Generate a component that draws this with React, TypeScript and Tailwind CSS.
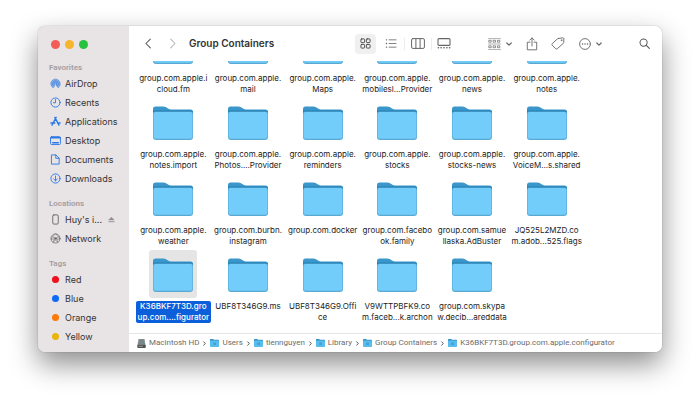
import type { ReactNode } from "react";
import clsx from "clsx";

type Entry = { lines: string[]; selected?: boolean };

const ENTRIES: Entry[] = [
  { lines: ["group.com.apple.i", "cloud.fm"] },
  { lines: ["group.com.apple.", "mail"] },
  { lines: ["group.com.apple.", "Maps"] },
  { lines: ["group.com.apple.", "mobilesl...Provider"] },
  { lines: ["group.com.apple.", "news"] },
  { lines: ["group.com.apple.", "notes"] },
  { lines: ["group.com.apple.", "notes.import"] },
  { lines: ["group.com.apple.", "Photos....Provider"] },
  { lines: ["group.com.apple.", "reminders"] },
  { lines: ["group.com.apple.", "stocks"] },
  { lines: ["group.com.apple.", "stocks-news"] },
  { lines: ["group.com.apple.", "VoiceM...s.shared"] },
  { lines: ["group.com.apple.", "weather"] },
  { lines: ["group.com.burbn.", "instagram"] },
  { lines: ["group.com.docker"] },
  { lines: ["group.com.facebo", "ok.family"] },
  { lines: ["group.com.samue", "llaska.AdBuster"] },
  { lines: ["JQ525L2MZD.co", "m.adob...525.flags"] },
  { lines: ["K36BKF7T3D.gro", "up.com....figurator"], selected: true },
  { lines: ["UBF8T346G9.ms"] },
  { lines: ["UBF8T346G9.Offi", "ce"] },
  { lines: ["V9WTTPBFK9.co", "m.faceb...k.archon"] },
  { lines: ["group.com.skypa", "w.decib...areddata"] },
];

const PATH = [
  "Macintosh HD",
  "Users",
  "tiennguyen",
  "Library",
  "Group Containers",
  "K36BKF7T3D.group.com.apple.configurator",
];

const TAGS = [
  { name: "Red", color: "bg-[#f0101c]" },
  { name: "Blue", color: "bg-[#0f6af5]" },
  { name: "Orange", color: "bg-[#fb7a08]" },
  { name: "Yellow", color: "bg-[#e9b50c]" },
  { name: "Green", color: "bg-[#28b83c]" },
];

function Folder() {
  return (
    <svg viewBox="0 0 40 34" className="h-[34px] w-10" aria-hidden>
      <path
        d="M0 3Q0 .5 2.500 .5H10Q12 .5 13.500 1.500L15.500 2.800Q16.500 3.500 18 3.500H37.500Q40 3.500 40 6V12H0Z"
        fill="#3b96cb"
      />
      <path d="M0 4.500H38.500Q40 4.500 40 6.500V12H0Z" fill="#2280b5" />
      <path d="M0 7.500Q0 5.500 2 5.500H38Q40 5.500 40 7.500V31Q40 34 37 34H3Q0 34 0 31Z" fill="#5aa9d2" />
      <path d="M.6 8Q.6 6 2.400 6H37.600Q39.400 6 39.400 8V30.500Q39.400 32.800 37 32.800H3Q.6 32.800 .6 30.500Z" fill="#72cdfa" />
    </svg>
  );
}

function MiniFolder() {
  return (
    <svg viewBox="0 0 9 8" className="h-2 w-[9px] shrink-0" aria-hidden>
      <path d="M0 .7Q0 0 .7 0H3L4 .8H8.300Q9 .8 9 1.500V4H0Z" fill="#318fc4" />
      <rect y="1.500" width="9" height="6.500" rx=".7" fill="#58bdec" />
      <rect x="3.200" y="3.500" width="2.800" height="2.500" rx=".5" fill="#3fa3d3" />
    </svg>
  );
}

function Drive() {
  return (
    <svg viewBox="0 0 9 9" className="size-[9px] shrink-0" aria-hidden>
      <path d="M1.500 0H7.500L8.600 6.500H.4Z" fill="#8b8f90" />
      <path d="M2.200 .8H6.800L7.500 5H1.500Z" fill="#78888a" />
      <rect x=".3" y="5.800" width="8.400" height="3.200" rx=".7" fill="#4c4e50" />
      <path d="M1.300 7.300H6" stroke="#b9bdbf" strokeWidth=".7" />
    </svg>
  );
}

function Glyph({
  size = "size-[11px]",
  box = "0 0 12 12",
  children,
}: {
  size?: string;
  box?: string;
  children: ReactNode;
}) {
  return (
    <svg
      viewBox={box}
      className={clsx("shrink-0", size)}
      fill="none"
      stroke="currentColor"
      strokeLinecap="round"
      strokeLinejoin="round"
      aria-hidden
    >
      {children}
    </svg>
  );
}

const FAVORITES = [
  {
    name: "AirDrop",
    icon: (
      <Glyph>
        <path d="M3.200 10.600A5.100 5.100 0 1 1 8.800 10.600L6.700 7.500A1 1 0 1 0 5.300 7.500Z" fill="currentColor" fillOpacity=".5" strokeWidth=".6" />
        <path d="M3.500 8.300A3.200 3.200 0 1 1 8.500 8.300M4.700 7.400A1.700 1.700 0 1 1 7.300 7.400" strokeWidth=".6" />
      </Glyph>
    ),
  },
  {
    name: "Recents",
    icon: (
      <Glyph>
        <circle cx="6" cy="6" r="5" />
        <path d="M6 2.800V6.300H3.700" />
      </Glyph>
    ),
  },
  {
    name: "Applications",
    icon: (
      <Glyph>
        <path d="M5.300 1.500L9.800 10M6.700 1.500L2.200 10M1 7.700H5.300M8.300 7.700H11" strokeWidth="1.500" />
      </Glyph>
    ),
  },
  {
    name: "Desktop",
    icon: (
      <Glyph>
        <rect x=".6" y="1.800" width="10.800" height="8.600" rx="1.200" />
        <path d="M.8 3H11.200" strokeWidth="1.400" />
        <path d="M3 8.500H9" strokeWidth="1.800" />
      </Glyph>
    ),
  },
  {
    name: "Documents",
    icon: (
      <Glyph>
        <path d="M2 1H6.500L10 4.500V11H2ZM6.300 1V4.700H10" />
      </Glyph>
    ),
  },
  {
    name: "Downloads",
    icon: (
      <Glyph>
        <circle cx="6" cy="6" r="5" />
        <path d="M6 3.300V8.400M4 6.600L6 8.500L8 6.600" />
      </Glyph>
    ),
  },
];

function SidebarHeading({ children }: { children: ReactNode }) {
  return (
    <h2 className="h-3 shrink-0 pl-[11px] font-['Roboto','Liberation_Sans',sans-serif] text-[8px] leading-3 font-semibold text-[#a39d9e]">
      {children}
    </h2>
  );
}

function SidebarItem({
  icon,
  label,
  children,
}: {
  icon: ReactNode;
  label: string;
  children?: ReactNode;
}) {
  return (
    <li>
      <button
        type="button"
        className="flex h-[19px] w-full items-center gap-1 pr-[14px] pl-3 text-left text-[9px] leading-3 text-[#353334]"
      >
        <span className="flex w-[11px] justify-center">{icon}</span>
        <span>{label}</span>
        {children}
      </button>
    </li>
  );
}

function Sidebar() {
  return (
    <aside className="flex w-[91px] shrink-0 flex-col overflow-hidden bg-[#e8e3e4]">
      <div className="flex h-9 shrink-0 items-center gap-[5px] pl-[13px]">
        <button type="button" aria-label="Close" className="size-[9px] rounded-full bg-[#f25d57]" />
        <button type="button" aria-label="Minimize" className="size-[9px] rounded-full bg-[#f7b42d]" />
        <button type="button" aria-label="Zoom" className="size-[9px] rounded-full bg-[#28c23f]" />
      </div>
      <SidebarHeading>Favorites</SidebarHeading>
      <ul className="mb-[10px] shrink-0">
        {FAVORITES.map((item) => (
          <SidebarItem
            key={item.name}
            label={item.name}
            icon={<span className="text-[#2b79e6]">{item.icon}</span>}
          />
        ))}
      </ul>
      <SidebarHeading>Locations</SidebarHeading>
      <ul className="mb-[10px] shrink-0">
        <SidebarItem
          label="Huy's i..."
          icon={
            <Glyph>
              <rect x="3" y="1" width="6" height="10" rx="1.200" stroke="#6a6667" />
            </Glyph>
          }
        >
          <span className="ml-auto text-[#8f8b8c]">
            <Glyph size="size-[7px]" box="0 0 8 8">
              <path d="M4 1.500L7 4.500H1Z" fill="currentColor" strokeWidth=".5" />
              <path d="M1 6.500H7" />
            </Glyph>
          </span>
        </SidebarItem>
        <SidebarItem
          label="Network"
          icon={
            <span className="text-[#6a6667]">
              <Glyph>
                <circle cx="6" cy="6" r="5" strokeWidth=".8" />
                <circle cx="6" cy="6" r="1.200" fill="currentColor" strokeWidth=".4" />
                <path d="M6 1L3 4L1.200 6.800L4.500 6.500L3.500 10.200L6 7.500L8.500 10.200L7.500 6.500L10.800 6.800L9 4ZM3 4L6 6L9 4" strokeWidth=".6" />
              </Glyph>
            </span>
          }
        />
      </ul>
      <SidebarHeading>Tags</SidebarHeading>
      <ul className="shrink-0">
        {TAGS.map((tag) => (
          <SidebarItem
            key={tag.name}
            label={tag.name}
            icon={<span className={clsx("size-[7px] rounded-full", tag.color)} />}
          />
        ))}
      </ul>
    </aside>
  );
}

function ToolButton({
  label,
  className,
  children,
}: {
  label: string;
  className?: string;
  children: ReactNode;
}) {
  return (
    <button
      type="button"
      aria-label={label}
      className={clsx("flex h-5 shrink-0 items-center justify-center", className)}
    >
      {children}
    </button>
  );
}

function DownArrow() {
  return (
    <Glyph size="size-[6px]" box="0 0 6 6">
      <path d="M.8 2L3 4.200L5.200 2" strokeWidth="1.200" />
    </Glyph>
  );
}

function Toolbar() {
  return (
    <header className="flex h-[35px] shrink-0 items-center pr-3 text-[#666]">
      <ToolButton label="Back" className="ml-[13px] w-3 text-[#555]">
        <Glyph>
          <path d="M8 1.200L3.200 6L8 10.800" strokeWidth="1.100" />
        </Glyph>
      </ToolButton>
      <ToolButton label="Forward" className="ml-3 w-3 text-[#b4b4b4]">
        <Glyph>
          <path d="M4 1.200L8.800 6L4 10.800" strokeWidth="1.100" />
        </Glyph>
      </ToolButton>
      <h1 className="ml-[11px] w-[166px] text-[10px] font-semibold whitespace-nowrap text-[#333]">
        Group Containers
      </h1>
      <ToolButton label="Icon view" className="w-[21px] rounded-[4px] bg-[#f0f0f0] text-[#444]">
        <Glyph>
          <rect x="1" y="1" width="4" height="4" rx=".8" />
          <rect x="7" y="1" width="4" height="4" rx=".8" />
          <rect x="1" y="7" width="4" height="4" rx=".8" />
          <rect x="7" y="7" width="4" height="4" rx=".8" />
        </Glyph>
      </ToolButton>
      <ToolButton label="List view" className="ml-px w-[27px]">
        <Glyph size="h-[11px] w-3">
          <path d="M4 2H11.500M4 6H11.500M4 10H11.500" strokeWidth=".9" />
          <path d="M1 2H1.200M1 6H1.200M1 10H1.200" strokeWidth="1.400" />
        </Glyph>
      </ToolButton>
      <span className="h-3 w-px bg-[#ececec]" />
      <ToolButton label="Column view" className="w-[26px]">
        <Glyph size="h-[11px] w-[14px]" box="0 0 14 11">
          <rect x=".6" y=".6" width="12.800" height="9.800" rx="1.300" />
          <path d="M4.900 .8V10.200M9.100 .8V10.200" />
        </Glyph>
      </ToolButton>
      <span className="h-3 w-px bg-[#ececec]" />
      <ToolButton label="Gallery view" className="w-6">
        <Glyph size="h-[11px] w-[14px]" box="0 0 14 11">
          <rect x="1" y=".6" width="12" height="6.800" rx="1" strokeWidth="1.100" />
          <path d="M1.300 9.700H1.500M4 9.700H4.200M6.900 9.700H7.100M9.800 9.700H10M12.500 9.700H12.700" strokeWidth="1.500" />
        </Glyph>
      </ToolButton>
      <ToolButton label="Group items" className="ml-8 gap-[5px]">
        <Glyph size="h-3 w-[13px]" box="0 0 13 12">
          <path d="M.5 .6H12.500M.5 6H12.500M.5 11.500H12.500" strokeWidth=".5" />
          <path d="M1.200 2.300H3.200V4.200H1.200ZM5.500 2.300H7.500V4.200H5.500ZM9.800 2.300H11.800V4.200H9.800ZM1.200 7.800H3.200V9.700H1.200ZM5.500 7.800H7.500V9.700H5.500ZM9.800 7.800H11.800V9.700H9.800Z" strokeWidth=".7" />
        </Glyph>
        <DownArrow />
      </ToolButton>
      <ToolButton label="Share" className="ml-[14px] w-3">
        <Glyph size="h-[14px] w-3" box="0 0 12 14">
          <path d="M4 5.200H1.300V12.800H10.700V5.200H8M6 9V1M3.800 3.100L6 .9L8.200 3.100" strokeWidth=".9" />
        </Glyph>
      </ToolButton>
      <ToolButton label="Edit tags" className="ml-[13px] w-[14px]">
        <Glyph size="h-[13px] w-[14px]" box="0 0 14 13">
          <path d="M7.400 1.500L11.800 .8Q12.800 .7 12.900 1.700L12.700 5.500Q12.600 6.200 12 6.700L6.100 11.800Q5.300 12.500 4.600 11.700L1.200 8.100Q.5 7.300 1.300 6.600L6.200 2.100Q6.800 1.600 7.400 1.500Z" strokeWidth=".9" />
          <circle cx="10.500" cy="3.200" r=".5" strokeWidth=".7" />
        </Glyph>
      </ToolButton>
      <ToolButton label="More actions" className="ml-[14px] gap-[5px]">
        <Glyph size="size-3">
          <circle cx="6" cy="6" r="5.400" strokeWidth=".9" />
          <path d="M3.500 6H3.600M6 6H6.100M8.500 6H8.600" strokeWidth="1.400" />
        </Glyph>
        <DownArrow />
      </ToolButton>
      <ToolButton label="Search" className="ml-auto w-3 text-[#555]">
        <Glyph>
          <circle cx="5" cy="5" r="3.900" strokeWidth="1.100" />
          <path d="M8 8L11.300 11.300" strokeWidth="1.200" />
        </Glyph>
      </ToolButton>
    </header>
  );
}

function FolderItem({ lines, selected }: Entry) {
  return (
    <button
      type="button"
      aria-pressed={!!selected}
      className="flex h-[73px] flex-col items-center gap-[3px]"
    >
      <span
        className={clsx(
          "flex size-12 shrink-0 items-end justify-center rounded-[3px] pb-[6px]",
          selected && "bg-[#e5e5e5]",
        )}
      >
        <Folder />
      </span>
      <span
        className={clsx(
          "rounded-[2px] px-[2px] text-[8px] leading-[11px] whitespace-nowrap",
          selected ? "bg-[#0c5fdb] font-medium text-white" : "text-[#1c1c1c]",
        )}
      >
        {lines.map((line) => (
          <span key={line} className="block">
            {line}
          </span>
        ))}
      </span>
    </button>
  );
}

function PathBar() {
  return (
    <nav aria-label="Path" className="h-[19px] shrink-0 border-t border-[#e6e6e6] pl-2">
      <ol className="flex h-full items-center font-['Roboto','Liberation_Sans',sans-serif] text-[8px] whitespace-nowrap text-[#6c6c6c]">
        {PATH.map((name, i) => (
          <li key={name} className="flex items-center">
            {i === 0 ? <Drive /> : <MiniFolder />}
            <a href="#" className="ml-[3px]">
              {name}
            </a>
            {i < PATH.length - 1 && (
              <span className="mx-[3px] text-[#555]">
                <Glyph size="size-[5px]" box="0 0 6 6">
                  <path d="M2 1L4 3L2 5" strokeWidth="1.200" />
                </Glyph>
              </span>
            )}
          </li>
        ))}
      </ol>
    </nav>
  );
}

export default function App() {
  return (
    <div className="h-dvh bg-white px-[38px] pt-[26px] pb-[50px] font-['Inter','Liberation_Sans',sans-serif]">
      <div className="flex h-full overflow-hidden rounded-[7px] shadow-[0_0_1px_rgba(0,0,0,0.5),0_12px_28px_rgba(0,0,0,0.45)]">
        <Sidebar />
        <main className="flex min-w-0 flex-1 flex-col bg-white">
          <Toolbar />
          <section
            aria-label="Folders"
            className="flex min-h-0 flex-1 flex-col justify-end overflow-hidden pr-[78px] pb-[10px] pl-[7px]"
          >
            <div className="grid shrink-0 grid-cols-6 gap-y-[3px]">
              {ENTRIES.map((entry) => (
                <FolderItem key={entry.lines.join("")} {...entry} />
              ))}
            </div>
          </section>
          <PathBar />
        </main>
      </div>
    </div>
  );
}
